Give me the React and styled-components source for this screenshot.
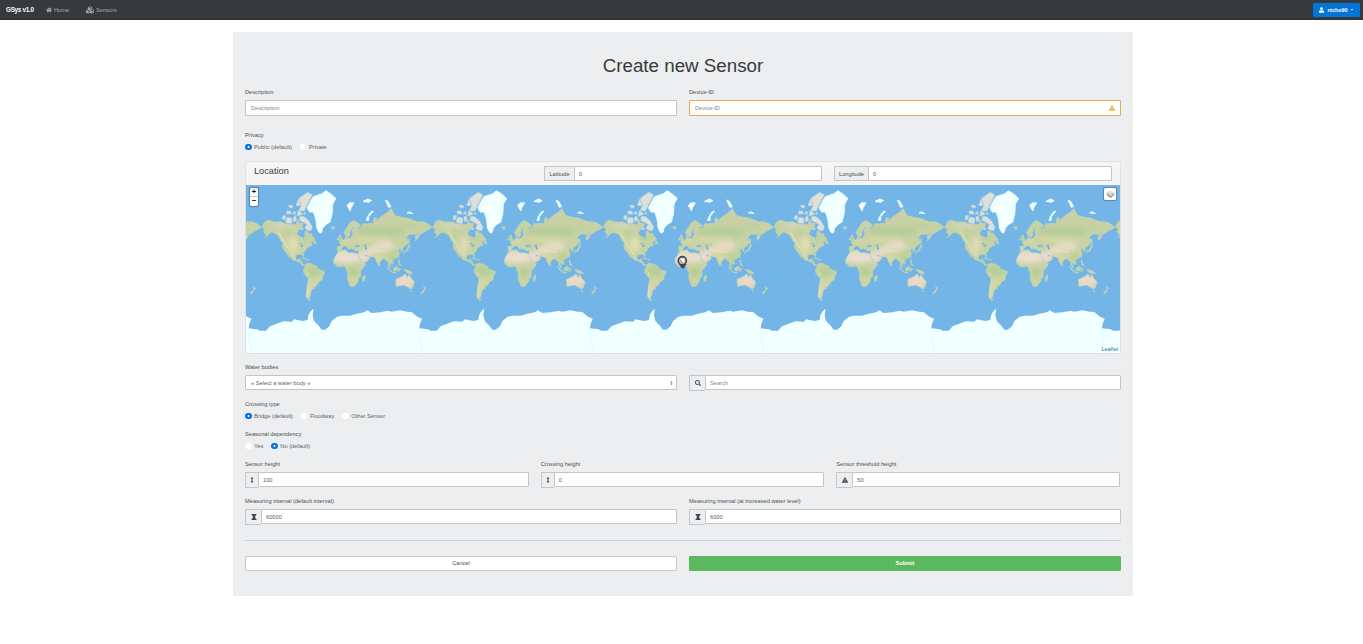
import React from "react";
import styled, { createGlobalStyle } from "styled-components";
import { FaHome, FaCubes, FaUser, FaSearch, FaExclamationTriangle } from "react-icons/fa";

const Global = createGlobalStyle`
  * { box-sizing: border-box; }
  body {
    margin: 0;
    background: #fff;
    color: #4c5053;
    font: 5.7px/8px "Liberation Sans", Arial, sans-serif;
    overflow: hidden;
  }
`;

const Navbar = styled.nav`
  display: flex;
  align-items: center;
  height: 20px;
  padding: 0 3px 0 6px;
  background: #373a3c;
  border-bottom: 1px solid #2f3133;
`;
const Brand = styled.span`
  width: 40px;
  color: #fff;
  font-size: 6.3px;
  font-weight: 700;
  letter-spacing: -0.25px;
  white-space: nowrap;
`;
const NavLink = styled.a`
  display: flex;
  align-items: center;
  gap: 2px;
  width: ${(p) => p.$width}px;
  color: #a9abac;
  white-space: nowrap;
  svg { width: ${(p) => p.$icon}px; height: ${(p) => p.$icon}px; }
`;
const UserButton = styled.button`
  display: flex;
  align-items: center;
  justify-content: space-between;
  width: 47px;
  height: 14px;
  margin-left: auto;
  padding: 0 7px 0 6px;
  border: 0;
  border-radius: 1px;
  background: #0275d8;
  color: #fff;
  font: 700 5.5px/8px "Liberation Sans", Arial, sans-serif;
  letter-spacing: -0.1px;
  svg { width: 5px; height: 6px; }
`;
const Caret = styled.i`
  width: 2px;
  height: 1px;
  background: #cfe5f8;
`;

const Card = styled.main`
  display: flex;
  flex-direction: column;
  width: 900px;
  height: 564px;
  margin: 12px 0 0 233px;
  padding: 22px 12px 0;
  background: #eceeef;
`;
const Title = styled.h1`
  margin: 0 0 10px;
  color: #373a3c;
  font-size: 18.75px;
  font-weight: 400;
  line-height: 24px;
  text-align: center;
`;
const Row = styled.div`
  display: grid;
  grid-template-columns: repeat(${(p) => p.$cols || 2}, 1fr);
  column-gap: 12px;
  align-items: end;
  margin-bottom: ${(p) => p.$after || 10}px;
  padding-right: ${(p) => (p.$cols === 3 ? 1 : 0)}px;
`;
const Field = styled.div`
  display: flex;
  flex-direction: column;
  gap: 4px;
  margin-bottom: ${(p) => p.$after || 0}px;
`;
const Label = styled.label`
  height: 8px;
  white-space: nowrap;
`;
const Control = styled.div`
  display: flex;
  flex: 1 0 auto;
  align-items: center;
  justify-content: space-between;
  min-height: ${(p) => p.$height || 15}px;
  padding: 0 5px 0 ${(p) => (p.$attached ? 4 : 5)}px;
  border: 1px solid ${(p) => (p.$warning ? "#e9ab52" : "#c3c5c7")};
  border-radius: ${(p) => (p.$attached ? "0 1px 1px 0" : "1px")};
  background: #fff;
  color: ${(p) => (p.$placeholder ? "#84888a" : "#606365")};
  svg { width: 6px; height: 6px; color: #edab50; }
`;
const Group = styled.div`
  display: flex;
  align-items: flex-start;
  height: 15px;
`;
const Addon = styled.span`
  display: flex;
  align-items: center;
  justify-content: center;
  width: ${(p) => p.$width}px;
  height: ${(p) => p.$height || 16}px;
  border: 1px solid #c3c5c7;
  border-right: 0;
  border-radius: 1px 0 0 1px;
  background: #eceeef;
  white-space: nowrap;
  svg { width: 6px; height: 6px; color: #45484a; }
`;
const Radios = styled.div`
  display: flex;
  height: 8px;
  gap: 8px;
`;
const Radio = styled.label`
  display: flex;
  align-items: center;
  gap: 2.5px;
  color: #606365;
  white-space: nowrap;
  &::before {
    content: "";
    width: 6.5px;
    height: 6.5px;
    border-radius: 50%;
    background: ${(p) => (p.$checked ? "radial-gradient(circle, #fff 0 0.6px, #0275d8 1.3px)" : "#fff")};
  }
`;

const MapCard = styled.section`
  display: flex;
  flex-direction: column;
  height: 193px;
  margin-bottom: 9px;
  border: 1px solid #e0e1e2;
  border-radius: 1px;
`;
const MapHeader = styled.header`
  display: grid;
  grid-template-columns: 278px 278px 278px;
  column-gap: 12px;
  height: 23px;
  padding: 4px 8px 0;
  background: #f5f5f5;
`;
const MapTitle = styled.h2`
  margin: 0;
  color: #373a3c;
  font-size: 9.2px;
  font-weight: 400;
  line-height: 10px;
`;
const MapView = styled.div`
  position: relative;
  height: 168px;
  overflow: hidden;
  background: #73b5e6;
  > svg { display: block; width: 874px; height: 168px; }
`;
const Zoom = styled.div`
  position: absolute;
  top: 3px;
  left: 4px;
  width: 8px;
  height: 18px;
  border-radius: 1.5px;
  background: #fff;
  box-shadow: 0 0 1px 0.5px rgba(0, 0, 0, 0.3);
`;
const ZoomButton = styled.div`
  height: 9px;
  border-bottom: ${(p) => (p.$top ? "1px solid #ccc" : "0")};
  color: #000;
  font-size: 7.5px;
  font-weight: 700;
  line-height: 8px;
  text-align: center;
`;
const Layers = styled.div`
  position: absolute;
  top: 3px;
  right: 4px;
  display: flex;
  align-items: center;
  justify-content: center;
  width: 12px;
  height: 12px;
  border-radius: 1.5px;
  background: #fff;
  box-shadow: 0 0 1px 0.5px rgba(0, 0, 0, 0.25);
`;
const Attribution = styled.a`
  position: absolute;
  right: 0;
  bottom: 0;
  padding: 0 2px;
  background: rgba(255, 255, 255, 0.6);
  color: #0078a8;
  font-size: 5.5px;
`;
const Rule = styled.hr`
  width: 100%;
  height: 1px;
  margin: 6px 0 15px;
  border: 0;
  background: #d0d2d3;
`;
const Button = styled.button`
  height: 15px;
  padding: 0;
  border: 1px solid ${(p) => (p.$submit ? "#5cb85c" : "#c6c8ca")};
  border-radius: 1px;
  background: ${(p) => (p.$submit ? "#5cb85c" : "#fff")};
  color: ${(p) => (p.$submit ? "#fff" : "#45484a")};
  font: ${(p) => (p.$submit ? 700 : 400)} 5.6px/13px "Liberation Sans", Arial, sans-serif;
`;

/* Coastlines as lon,lat pairs. */
const LAND = [
  // North America
  "-168,65.5 -162,70 -156,71.3 -141,69.7 -128,70 -115,68 -108,68 -95,68 -94,72 -90,69 -82,69 -82,67 -87,65 -94,61 -94,58.5 -88,56.5 -82,55 -82,52.5 -79,51.5 -79,55 -77,57 -78,60 -77,62.5 -73,62 -69,59 -65,60 -62,57 -57,54 -56,52 -60,50 -66,50 -65,48 -61,46 -65,43.5 -70,43.5 -70,41.5 -74,40 -76,36 -81,31.5 -80,26 -81.5,25 -83,29.5 -90,29.5 -97,28 -97.5,22 -94,18 -91,19 -87,21.5 -88,16 -84,15.5 -83,10 -79,9.5 -77,8 -80,7.5 -83,8 -87,13 -94,16 -105,20 -106,23 -110,27 -113,31 -114.5,31 -110,23 -112,26 -116,31 -118,34 -123,38 -124.5,43 -124,48 -128,51 -134,58 -141,60 -147,61 -152,60 -156,57.5 -163,55 -158,58.5 -162,59.5 -165,62 -161,64",
  // South America
  "-77,8 -72,12 -62,10.5 -52,5 -50,0 -44,-2.5 -35,-6 -39,-13 -41,-22 -48,-26 -53,-33 -58,-35 -57,-38 -62,-39 -65,-43 -66,-48 -69,-52 -66,-55 -72,-54 -75,-50 -74,-42 -72,-30 -70,-18 -76,-14 -81,-6 -80,-1 -77,4",
  // Africa
  "-6,36 10,37 11,34 20,31 20,33 32,31 35,28 37,21 43,12 51,12 48,5 40,-3 40,-15 35,-20 35,-24 32,-28 27,-34 19,-34.5 15,-27 12,-18 13,-8 9,-1 9,4 4,6 -8,4.5 -13,9 -17,14 -16,21 -10,30",
  // Eurasia
  "-9,37 -9,43 -1.5,43.5 -1,46 -4.5,48.5 2,51 5,53 8,54 8,57 10.5,57.5 10,54.5 14,54 20,54.5 22,57.5 24,59 29,60 23,60 21.5,63 25,65.5 22,65.5 17,61 18,59 16,56.5 13,55.5 11,59 7,58 5,61 12,66 18,69.5 25,71 33,69.5 41,67 40,66 33,66.5 38,64 44,66 44,68.5 54,68.5 60,69 68,68.5 67,71 70,73 74,72 73,68 76,71.5 80,72.5 86,74 98,76 104,77.7 113,74 128,73 140,72.5 160,70 170,70 180,69 190,66 187,64.5 178,62.5 170,60 163,58 162,55 156,51 156,57 163,61 155,59 143,59 136,54.5 141,52 140,48 133,43 128,40 129,36 126,34.5 125,39 121,40 118,38.5 122,37 119,35 122,31 120,26 114,22 109,21.5 106,19 109,12 105,9 102,13 100,13 103,2 101,3 98,9 98,16 94,17 91,22 87,21 80,15 80,10 77,8 73,17 72,21 67,25 57,26 56,27 51,29 48,30 51,25 56,26 60,22 55,17 45,12.5 43,14 39,21 35,28 35,31 36,36.5 30,36.5 27,37 26,40 29,41 35,42 41,41.5 37,45 39,47 33,45 31,46.5 28,43.5 28,41 24,40.5 23,37 19,41 13.5,45.5 18,40 16,38 11,42.5 9,44.5 3,43 0,40 -2,37 -5.5,36",
  // Australia and Tasmania
  "114,-22 122,-18 129,-15 132,-11.5 137,-12 136,-15 140,-17.5 142,-11 146,-19 153,-26 150,-37 144,-38.5 138,-35 132,-32 124,-33 115,-34.5",
  "145,-41 148,-41 147,-43.5",
  // British Isles and Iceland
  "-5,50 1,51 0,54 -3,58.5 -6,57 -3,54", "-10,52 -6,52 -6,55 -9,54", "-24,65.5 -14,65 -19,63.4 -16,66.5",
  // Madagascar and Sri Lanka
  "44,-17 49,-12 50,-16 47,-25 44,-24", "80,9 82,7 80,6",
  // Japan and Sakhalin
  "130,31 132,34 139,36 141,41 145,43 141,45 140,42 137,37 131,34", "142,46 143,54 142,54",
  // Indonesia, Philippines, New Guinea
  "95,5 106,-6 103,-4 98,0", "105,-6 114,-7 114,-8.5 106,-7", "109,2 117,6 119,1 116,-4 110,-3", "120,1 125,1 121,0 122,-5 120,-5",
  "120,18 122,18 121,14 126,7 122,7 120,14", "131,-1 138,-2 147,-6 150,-10 142,-9 138,-8",
  // New Zealand
  "173,-35 178,-38 175,-41 174,-38", "172,-41 174,-42 169,-46.5 167,-45",
  // Caribbean and Newfoundland
  "-84,22 -77,21 -75,20 -80,23", "-74,19 -69,19 -71,18", "-59,47.5 -53,47 -56,51",
  // Taiwan and Hainan
  "120,23 121,25 121,22", "109,19 111,20 110,18",
];
const ARCTIC = [
  "-62,66 -64,63 -70,62.5 -78,65 -73,68 -82,70 -89,71 -88,73.5 -80,73.5 -70,71",
  "-116,69 -105,69 -105,72.5 -115,73 -118,71", "-125,72 -120,71.5 -118,74 -124,74",
  "-101,70 -96,71 -97,74 -102,73", "-94,74 -91,74 -82,75 -92,76.7", "-80,75 -76,75 -78,76",
  "-90,76.7 -79,76.5 -74,79 -62,82.5 -72,83.2 -90,81.5 -85,79", "-96,79 -87,79 -91,81.3", "-116,75 -106,75 -108,76.5 -116,76.5",
  "-110,78 -103,78 -104,79 -112,79", "-104,75 -97,75 -99,76.5", "-87,64 -81,63.5 -84,66",
];
const ICE = [
  "-73,78 -68,76 -60,76 -56,73 -54,70.5 -53,66 -50,62.5 -46,60 -42,61 -40,65 -33,68 -24,70 -22,73 -20,75 -19,79.5 -12,81.5 -22,82.7 -33,83.6 -42,82.8 -50,82.5 -60,82 -66,80.5",
  "11,79 17,80 26,80 20,78 18,76.5 14,78", "52,71 57,71 57,73.5 67,76.5 61,76 54,73", "45,80.5 57,80.2 63,80.8 55,81.3",
  "92,81 98,80.5 104,78.5 99,78.2", "138,75.5 150,75.2 143,76.2",
];
const SEAS = ["47,45 53,46.5 51,44 54,40 53,37 50,37.5 49,41", "-92,47 -85,48.5 -84,46 -80,45 -83,42 -87,42 -85,46", "58,46 61,46 60,44"];
const ANTARCTICA =
  "M48 515L60 521L78 521L90 508L110 500L130 493L155 494L163 487L175 490L190 492L203 488L205 475L212 463L221 455L218 475L222 492L235 505L245 518L255 518L268 508L275 492L290 480L305 476L330 476L350 470L372 466L382 460L395 468L420 466L445 461L455 464L480 460L500 464L515 465L530 478L546 485L540 500L538 514L564 517V600H48Z";

function outline(points) {
  return (
    "M" +
    points
      .split(" ")
      .map((pair) => {
        const [lon, lat] = pair.split(",").map(Number);
        const x = 305 + (lon * 512) / 360;
        const y = 336 - (512 / (2 * Math.PI)) * Math.log(Math.tan(Math.PI / 4 + (lat * Math.PI) / 360));
        return `${x.toFixed(1)} ${y.toFixed(1)}`;
      })
      .join("L") +
    "Z"
  );
}
const landPath = LAND.map(outline).join("");
const arcticPath = ARCTIC.map(outline).join("");
const icePath = ICE.map(outline).join("");
const seaPath = SEAS.map(outline).join("");

/* Ground cover: cx, cy, rx, ry, colour */
const COVER = [
  [320, 300, 48, 18, "#e9decd"], [371, 299, 18, 16, "#ead9d2"], [428, 270, 34, 14, "#e5dcc2"], [395, 280, 22, 12, "#e5dac0"],
  [440, 262, 20, 8, "#e8dccb"], [415, 305, 10, 14, "#dcd8a6"], [494, 372, 30, 20, "#ead9cd"], [160, 262, 14, 22, "#e3dcb4"],
  [125, 205, 32, 9, "#d5d5b8"], [220, 342, 24, 18, "#b8cf9a"], [206, 395, 9, 25, "#e0d7b5"], [228, 375, 12, 12, "#d6d6a1"],
  [341, 345, 15, 14, "#b4ce96"], [340, 376, 13, 10, "#d4d2a0"], [420, 225, 75, 16, "#b5cd9a"], [400, 246, 55, 7, "#d8d9a6"],
  [440, 180, 45, 14, "#c7d1a5"], [500, 207, 45, 12, "#c4cfa2"], [190, 240, 24, 12, "#bfd09d"], [140, 228, 20, 9, "#c0d09e"],
  [458, 296, 16, 12, "#bfcf93"], [318, 254, 20, 10, "#d2d79e"], [165, 300, 10, 12, "#d4d3a0"],
];

function WorldMap() {
  return (
    <svg viewBox="0 0 2622 504" preserveAspectRatio="none" aria-label="World map">
      <defs>
        <clipPath id="land"><path d={landPath} /></clipPath>
        <filter id="soft" x="-50%" y="-50%" width="200%" height="200%"><feGaussianBlur stdDeviation="6" /></filter>
        <filter id="coast" x="-5%" y="-5%" width="110%" height="110%"><feGaussianBlur stdDeviation="1.1" /></filter>
        <g id="world">
          <g filter="url(#coast)">
            <path d={landPath} fill="#c8d3a5" stroke="#c3d3b4" strokeWidth="2" strokeLinejoin="round" />
            <g clipPath="url(#land)">
              <g filter="url(#soft)">
                {COVER.map(([cx, cy, rx, ry, fill], i) => <ellipse key={i} cx={cx} cy={cy} rx={rx} ry={ry} fill={fill} />)}
              </g>
              <path d="M112 222L130 250L145 275L160 295M203 345L200 380L203 420M385 277L410 281L440 286" fill="none" stroke="#ece3c3" strokeWidth="4" opacity=".6" />
            </g>
            <path d={arcticPath} fill="#dfe1d8" stroke="#bfd8df" strokeWidth="2" />
            <path d={icePath} fill="#f2ffff" stroke="#e2f7fb" strokeWidth="3" strokeLinejoin="round" />
            <path d={seaPath} fill="#73b5e6" />
          </g>
          <path d={ANTARCTICA} fill="#f0ffff" />
          <path d="M538 514L546 590" stroke="#e6f8f8" strokeWidth="2" />
        </g>
      </defs>
      {[-1, 0, 1, 2, 3, 4, 5].map((k) => <use key={k} href="#world" transform={`translate(${k * 512 - 18} -84)`} />)}
      <g transform="translate(1309 227)">
        <path d="M-7 12L-1 21H4L9 12Z" fill="#45494a" stroke="#45494a" strokeWidth="4" />
        <circle r="12" fill="#cfd0cc" stroke="#3f4344" strokeWidth="5" />
        <path d="M-5 -3L3 -7L7 2L1 5Z" fill="#fff" />
        <path d="M-7 -2L1 7" stroke="#858987" strokeWidth="3" />
      </g>
    </svg>
  );
}

const HeightIcon = () => (
  <svg viewBox="0 0 12 12"><path d="M6 0L9 3H7V9H9L6 12L3 9H5V3H3Z" fill="currentColor" /></svg>
);
const HourglassIcon = () => (
  <svg viewBox="0 0 12 12"><path d="M1 0H11V2H10L8 6L10 10H11V12H1V10H2L4 6L2 2H1Z" fill="currentColor" /></svg>
);
const LayersIcon = () => (
  <svg width="9" height="9" viewBox="0 0 16 16">
    <path d="M1 9L8 14L15 9V6H1Z" fill="#999" />
    <path d="M1 7L8 11L15 7L8 3Z" fill="#c4c4c4" />
    <path d="M1 5L8 9L15 5L8 2Z" fill="#e2ddd4" stroke="#cfcfcf" />
  </svg>
);
const ArrowsSvg = styled.svg`
  && { width: 5px; height: 6px; margin-right: -3px; color: #555; }
`;
const SelectArrows = () => (
  <ArrowsSvg viewBox="0 0 10 12"><path d="M3 5L5 2L7 5ZM3 7H7L5 10Z" fill="currentColor" /></ArrowsSvg>
);

function IconField({ label, icon, value, width = 16, placeholder }) {
  return (
    <Field>
      {label && <Label>{label}</Label>}
      <Group>
        <Addon $width={width}>{icon}</Addon>
        <Control $attached $placeholder={placeholder}>{value}</Control>
      </Group>
    </Field>
  );
}

function RadioField({ label, options, checked, after }) {
  return (
    <Field $after={after}>
      <Label>{label}</Label>
      <Radios>
        {options.map((option) => <Radio key={option} $checked={option === checked}>{option}</Radio>)}
      </Radios>
    </Field>
  );
}

export default function App() {
  return (
    <>
      <Global />
      <Navbar>
        <Brand>GSys v1.0</Brand>
        <NavLink $width={40} $icon={6}><FaHome />Home</NavLink>
        <NavLink $width={40} $icon={8}><FaCubes />Sensors</NavLink>
        <UserButton><FaUser />nicho90<Caret /></UserButton>
      </Navbar>
      <Card>
        <Title>Create new Sensor</Title>
        <Row $after={15}>
          <Field><Label>Description</Label><Control $height={16} $placeholder>Description</Control></Field>
          <Field><Label>Device-ID</Label><Control $height={16} $placeholder $warning>Device-ID<FaExclamationTriangle /></Control></Field>
        </Row>
        <RadioField label="Privacy" options={["Public (default)", "Private"]} checked="Public (default)" after={10} />
        <MapCard>
          <MapHeader>
            <MapTitle>Location</MapTitle>
            <Group><Addon $width={30} $height={15}>Latitude</Addon><Control $attached>0</Control></Group>
            <Group><Addon $width={34} $height={15}>Longitude</Addon><Control $attached>0</Control></Group>
          </MapHeader>
          <MapView>
            <WorldMap />
            <Zoom><ZoomButton $top>+</ZoomButton><ZoomButton>−</ZoomButton></Zoom>
            <Layers><LayersIcon /></Layers>
            <Attribution>Leaflet</Attribution>
          </MapView>
        </MapCard>
        <Row>
          <Field><Label>Water bodies</Label><Control>» Select a water body «<SelectArrows /></Control></Field>
          <IconField icon={<FaSearch />} value="Search" placeholder />
        </Row>
        <RadioField label="Crossing type" options={["Bridge (default)", "Floodway", "Other Sensor"]} checked="Bridge (default)" after={10} />
        <RadioField label="Seasonal dependency" options={["Yes", "No (default)"]} checked="No (default)" after={10} />
        <Row $cols={3}>
          <IconField label="Sensor height" icon={<HeightIcon />} value="100" width={13} />
          <IconField label="Crossing height" icon={<HeightIcon />} value="0" width={13} />
          <IconField label="Sensor threshold height" icon={<FaExclamationTriangle />} value="50" />
        </Row>
        <Row>
          <IconField label="Measuring interval (default interval)" icon={<HourglassIcon />} value="60000" />
          <IconField label="Measuring interval (at increased water level)" icon={<HourglassIcon />} value="6000" />
        </Row>
        <Rule />
        <Row>
          <Button>Cancel</Button>
          <Button $submit>Submit</Button>
        </Row>
      </Card>
    </>
  );
}
